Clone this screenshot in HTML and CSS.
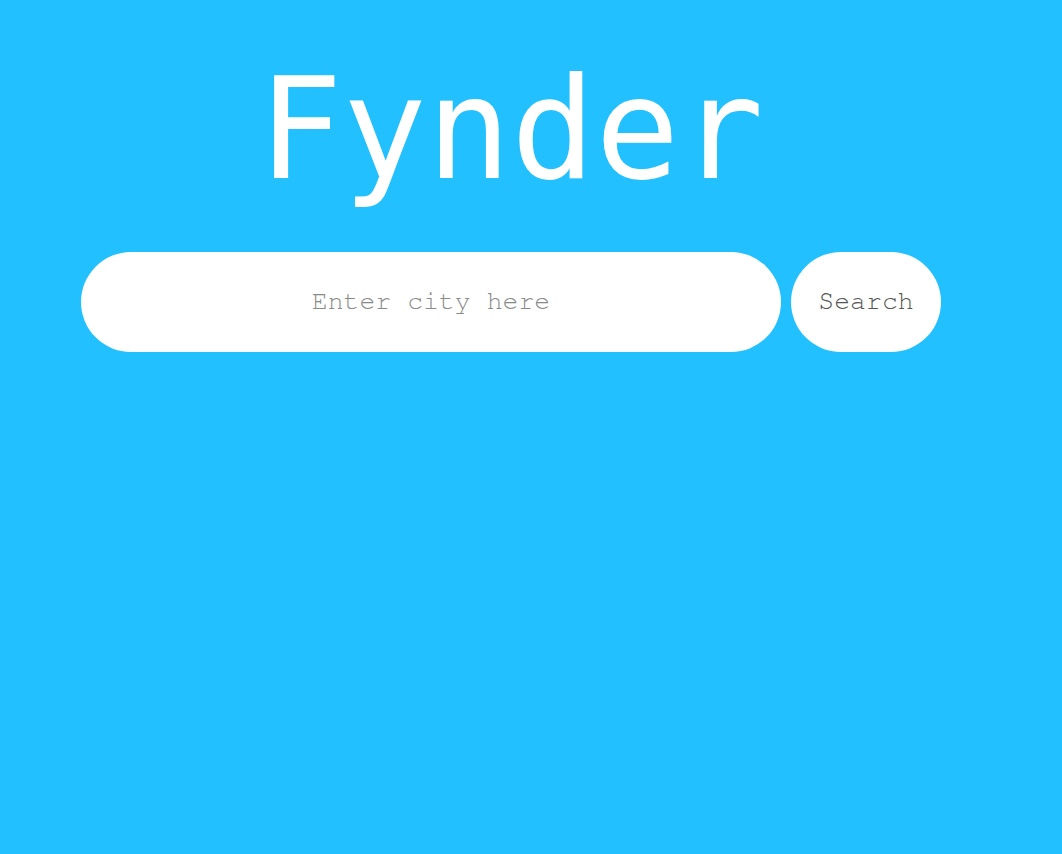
FILE: index.html
```html
<!DOCTYPE html>
<html>
<head>
<meta charset="utf-8">
<link rel="stylesheet" href="styles.css">
</head>
<body>
<main class="page">
  <h1 class="title">Fynder</h1>
  <form class="search">
    <input class="search-input" type="text" placeholder="Enter city here">
    <button class="search-btn" type="button">Search</button>
  </form>
</main>
</body>
</html>
```
FILE: styles.css
```css
html, body {
  margin: 0;
  height: 100%;
  background: #22c0ff;
}
.page {
  display: flex;
  flex-direction: column;
  align-items: center;
  padding: 48px 40px 0 0;
}
.title {
  margin: 0;
  font-family: "DejaVu Sans Mono", monospace;
  font-weight: normal;
  font-size: 140px;
  line-height: 163px;
  color: #ffffff;
}
.search {
  display: flex;
  gap: 10px;
  margin-top: 41px;
}
.search-input {
  box-sizing: border-box;
  width: 700px;
  height: 100px;
  border: none;
  border-radius: 50px;
  background: #ffffff;
  font-family: "Nimbus Mono PS", "FreeMono", "Courier", "Liberation Mono", monospace;
  font-size: 26.5px;
  text-align: center;
  color: #444;
  outline: none;
  padding: 0 20px 2px;
}
.search-input::placeholder {
  color: #8a8a8a;
}
.search-btn {
  box-sizing: border-box;
  width: 150px;
  height: 100px;
  border: none;
  border-radius: 50px;
  background: #ffffff;
  font-family: "Nimbus Mono PS", "FreeMono", "Courier", "Liberation Mono", monospace;
  font-size: 26.5px;
  color: #555555;
  padding: 0 0 2px;
}
```
